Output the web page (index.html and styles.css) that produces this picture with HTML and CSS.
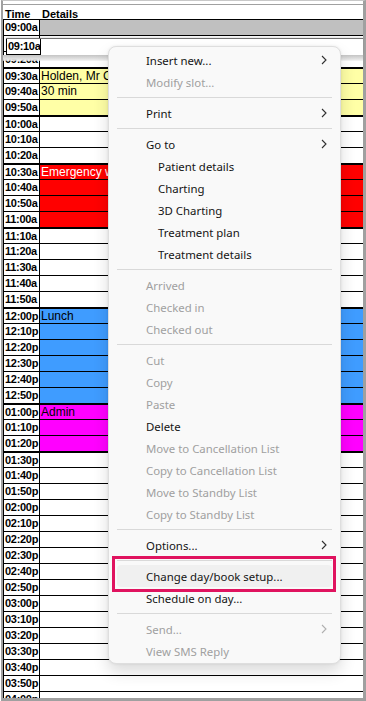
FILE: index.html
```html
<!DOCTYPE html>
<html lang="en">
<head>
    <meta charset="UTF-8">
    <meta name="viewport" content="width=device-width, initial-scale=1.0">
    <title>Appointment book</title>
    <link rel="stylesheet" href="styles.css">
</head>
<body>
<div class="screen">
    <div class="book">
        <div class="head">
            <div class="h-time">Time</div>
            <div class="h-det">Details</div>
        </div>
        <div class="grid">
            <div class="row"><div class="t">09:00a</div><div class="d grey"></div></div>
            <div class="row"><div class="t"></div><div class="d"></div></div>
            <div class="row"><div class="t">09:20a</div><div class="d"></div></div>
            <div class="row top"><div class="t">09:30a</div><div class="d yellow">Holden, Mr Chris</div></div>
            <div class="row"><div class="t">09:40a</div><div class="d yellow">30 min</div></div>
            <div class="row"><div class="t">09:50a</div><div class="d yellow"></div></div>
            <div class="row top"><div class="t">10:00a</div><div class="d"></div></div>
            <div class="row"><div class="t">10:10a</div><div class="d"></div></div>
            <div class="row"><div class="t">10:20a</div><div class="d"></div></div>
            <div class="row top"><div class="t">10:30a</div><div class="d red">Emergency walk-in</div></div>
            <div class="row"><div class="t">10:40a</div><div class="d red"></div></div>
            <div class="row"><div class="t">10:50a</div><div class="d red"></div></div>
            <div class="row"><div class="t">11:00a</div><div class="d red"></div></div>
            <div class="row top"><div class="t">11:10a</div><div class="d"></div></div>
            <div class="row"><div class="t">11:20a</div><div class="d"></div></div>
            <div class="row"><div class="t">11:30a</div><div class="d"></div></div>
            <div class="row"><div class="t">11:40a</div><div class="d"></div></div>
            <div class="row"><div class="t">11:50a</div><div class="d"></div></div>
            <div class="row top"><div class="t">12:00p</div><div class="d blue">Lunch</div></div>
            <div class="row"><div class="t">12:10p</div><div class="d blue"></div></div>
            <div class="row"><div class="t">12:20p</div><div class="d blue"></div></div>
            <div class="row"><div class="t">12:30p</div><div class="d blue"></div></div>
            <div class="row"><div class="t">12:40p</div><div class="d blue"></div></div>
            <div class="row"><div class="t">12:50p</div><div class="d blue"></div></div>
            <div class="row top"><div class="t">01:00p</div><div class="d pink">Admin</div></div>
            <div class="row"><div class="t">01:10p</div><div class="d pink"></div></div>
            <div class="row"><div class="t">01:20p</div><div class="d pink"></div></div>
            <div class="row top"><div class="t">01:30p</div><div class="d"></div></div>
            <div class="row"><div class="t">01:40p</div><div class="d"></div></div>
            <div class="row"><div class="t">01:50p</div><div class="d"></div></div>
            <div class="row"><div class="t">02:00p</div><div class="d"></div></div>
            <div class="row"><div class="t">02:10p</div><div class="d"></div></div>
            <div class="row"><div class="t">02:20p</div><div class="d"></div></div>
            <div class="row"><div class="t">02:30p</div><div class="d"></div></div>
            <div class="row"><div class="t">02:40p</div><div class="d"></div></div>
            <div class="row"><div class="t">02:50p</div><div class="d"></div></div>
            <div class="row"><div class="t">03:00p</div><div class="d"></div></div>
            <div class="row"><div class="t">03:10p</div><div class="d"></div></div>
            <div class="row"><div class="t">03:20p</div><div class="d"></div></div>
            <div class="row"><div class="t">03:30p</div><div class="d"></div></div>
            <div class="row"><div class="t">03:40p</div><div class="d"></div></div>
            <div class="row"><div class="t">03:50p</div><div class="d"></div></div>
            <div class="row"><div class="t">04:00p</div><div class="d"></div></div>
        </div>
    </div>

    <!-- slot being edited, raised over the grid -->
    <div class="lifted">
        <div class="t">09:10a</div>
        <div class="d"></div>
    </div>

    <div class="menu">
        <div class="item">Insert new...<svg class="chev" viewBox="0 0 6 10"><path d="M1 1l4 4-4 4"/></svg></div>
        <div class="item off">Modify slot...</div>
        <div class="sep"></div>
        <div class="item">Print<svg class="chev" viewBox="0 0 6 10"><path d="M1 1l4 4-4 4"/></svg></div>
        <div class="sep"></div>
        <div class="item">Go to<svg class="chev" viewBox="0 0 6 10"><path d="M1 1l4 4-4 4"/></svg></div>
        <div class="item sub">Patient details</div>
        <div class="item sub">Charting</div>
        <div class="item sub">3D Charting</div>
        <div class="item sub">Treatment plan</div>
        <div class="item sub">Treatment details</div>
        <div class="sep"></div>
        <div class="item off">Arrived</div>
        <div class="item off">Checked in</div>
        <div class="item off">Checked out</div>
        <div class="sep"></div>
        <div class="item off">Cut</div>
        <div class="item off">Copy</div>
        <div class="item off">Paste</div>
        <div class="item">Delete</div>
        <div class="item off">Move to Cancellation List</div>
        <div class="item off">Copy to Cancellation List</div>
        <div class="item off">Move to Standby List</div>
        <div class="item off">Copy to Standby List</div>
        <div class="sep"></div>
        <div class="item">Options...<svg class="chev" viewBox="0 0 6 10"><path d="M1 1l4 4-4 4"/></svg></div>
        <div class="sep"></div>
        <div class="item hover">Change day/book setup...</div>
        <div class="item">Schedule on day...</div>
        <div class="sep"></div>
        <div class="item off">Send...<svg class="chev" viewBox="0 0 6 10"><path d="M1 1l4 4-4 4"/></svg></div>
        <div class="item off">View SMS Reply</div>
    </div>

    <div class="callout"></div>
</div>
</body>
</html>
```

FILE: styles.css
```css
body {
    margin: 0;
    padding: 0;
    background: #ffffff;
    font-family: 'Liberation Sans', Arial, sans-serif;
    color: #000000;
}

.screen {
    position: relative;
    width: 366px;
    height: 701px;
    overflow: hidden;
}

.book {
    box-sizing: border-box;
    height: 701px;
    margin-left: 1px;
    border-top: 1px solid #c8c8c8;
    border-left: 2px solid #a0a0a0;
    border-right: 3px solid #a0a0a0;
    border-bottom: 3px solid #a0a0a0;
    overflow: hidden;
}

.head {
    display: flex;
    height: 16px;
    margin-top: 3px;
    padding-top: 3px;
    border-top: 1px solid #a0a0a0;
    border-bottom: 1px solid #000000;
    box-sizing: border-box;
    font-size: 11px;
    font-weight: bold;
    line-height: 12px;
}

.h-time {
    width: 36px;
    padding-left: 2px;
}

.h-det {
    padding-left: 1px;
}

.grid {
    border-left: 1px solid #000000;
}

.row {
    display: flex;
    height: 16px;
    box-sizing: border-box;
    border-bottom: 1px solid #000000;
}

.row.top {
    border-top: 1px solid #000000;
}

.t {
    width: 35px;
    flex: none;
    padding-left: 1px;
    box-sizing: border-box;
    border-right: 1px solid #000000;
    font-size: 11px;
    font-weight: bold;
    letter-spacing: -0.3px;
    line-height: 15px;
    white-space: nowrap;
    overflow: hidden;
}

.row .t {
    width: 36px;
}

.d {
    flex: 1;
    padding-left: 1px;
    font-size: 12px;
    line-height: 15px;
    white-space: nowrap;
    overflow: hidden;
}

.grey { background: #c0c0c0; }
.yellow { background: #ffffa6; }
.red { background: #ff0000; color: #ffffff; }
.blue { background: #3f9cff; }
.pink { background: #ff00ff; }

.lifted {
    position: absolute;
    left: 6px;
    top: 38px;
    width: 357px;
    height: 17px;
    display: flex;
    background: #ffffff;
    border-top: 1px solid #707070;
    box-sizing: border-box;
    box-shadow: 0 -1px 2px rgba(0, 0, 0, 0.12);
}

/* soft shade under the raised slot */
.lifted::after {
    content: "";
    position: absolute;
    left: -3px;
    right: 0;
    top: 16px;
    height: 6px;
    background: linear-gradient(#c4c4c4, #e4e4e4 70%, rgba(240, 240, 240, 0.6));
}

.lifted .t {
    width: 35px;
    height: 16px;
    border: 1px solid #000000;
    border-top: none;
    padding-left: 1px;
}

.menu {
    position: absolute;
    left: 108px;
    top: 46px;
    width: 233px;
    box-sizing: border-box;
    padding: 2px 0 1px;
    background: #f9f9f9;
    border: 1px solid #dedede;
    border-radius: 8px;
    box-shadow: 0 8px 16px rgba(0, 0, 0, 0.14), 0 0 3px rgba(0, 0, 0, 0.08);
    font-family: 'Noto Sans', sans-serif;
    font-size: 11.4px;
    color: #141414;
}

.item {
    display: flex;
    align-items: center;
    justify-content: space-between;
    height: 22px;
    margin: 0 8px;
    padding: 0 5px 0 29px;
    border-radius: 4px;
    white-space: nowrap;
}

.item.sub {
    padding-left: 41px;
}

.item.off {
    color: #a0a0a0;
}

.item.hover {
    background: #f0f0f0;
}

.chev {
    width: 6px;
    height: 10px;
    fill: none;
    stroke: #303030;
    stroke-width: 1.1;
}

.item.off .chev {
    stroke: #b0b0b0;
}

.sep {
    height: 1px;
    margin: 4px 8px;
    background: #d9d9d9;
}

.callout {
    position: absolute;
    left: 112px;
    top: 556px;
    width: 224px;
    height: 36px;
    box-sizing: border-box;
    border: 3px solid #e0135f;
}
```
